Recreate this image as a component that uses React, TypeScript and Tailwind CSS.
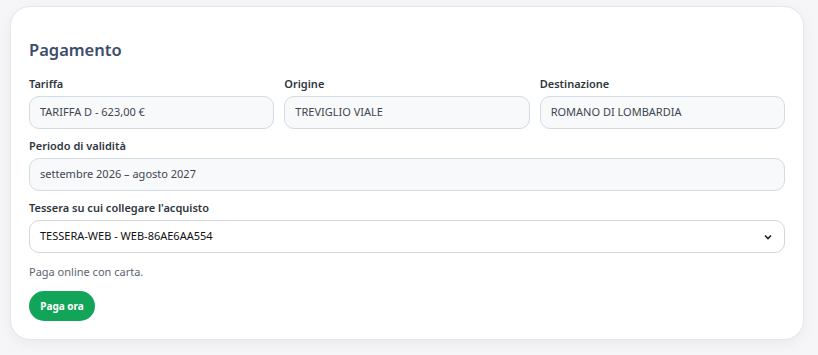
import React from "react";

const font = { fontFamily: '"Noto Sans", "Open Sans", sans-serif' };

function Field({ label, value }: { label: string; value: string }) {
  return (
    <div className="flex flex-col">
      <label className="text-[11px] leading-[16px] font-semibold text-[#2f3640] mb-[4px]">{label}</label>
      <div className="h-[33px] rounded-[10px] border border-[#d3dbe2] bg-[#f7f9fb] px-[10px] flex items-center text-[11px] text-[#3f4650]">
        {value}
      </div>
    </div>
  );
}

export default function App() {
  return (
    <div className="w-[818px] h-[355px] bg-[#f6f6f8] pl-[10px] pt-[6px]" style={font}>
      <div className="w-[794px] h-[334px] bg-white rounded-[20px] border border-[#e4e6ea] shadow-[0_4px_14px_rgba(0,0,0,0.05)] px-[18px] pt-[29px]">
        <h2 className="text-[16.5px] leading-[28px] font-semibold text-[#3c4d6b]">Pagamento</h2>
        <div className="grid grid-cols-3 gap-x-[10px] mt-[12px]">
          <Field label="Tariffa" value="TARIFFA D - 623,00 €" />
          <Field label="Origine" value="TREVIGLIO VIALE" />
          <Field label="Destinazione" value="ROMANO DI LOMBARDIA" />
        </div>
        <div className="mt-[9px]">
          <Field label="Periodo di validità" value="settembre 2026 – agosto 2027" />
        </div>
        <div className="mt-[9px] flex flex-col">
          <label className="text-[11px] leading-[16px] font-semibold text-[#2f3640] mb-[4px]">
            Tessera su cui collegare l'acquisto
          </label>
          <div className="h-[33px] rounded-[10px] border border-[#d3d7db] bg-white pl-[10px] pr-[12px] flex items-center justify-between text-[11px] text-[#111]">
            <span>TESSERA-WEB - WEB-86AE6AA554</span>
            <svg width="8" height="6" viewBox="0 0 8 6" fill="none">
              <path d="M1 1.5 L4 4.5 L7 1.5" stroke="#222" strokeWidth="1.6" />
            </svg>
          </div>
        </div>
        <p className="mt-[11px] text-[11px] leading-[16px] text-[#5b6470]">Paga online con carta.</p>
        <button className="mt-[11px] h-[30px] w-[66px] rounded-full bg-[#12a55a] text-white text-[10px] font-bold flex items-center justify-center">
          Paga ora
        </button>
      </div>
    </div>
  );
}
